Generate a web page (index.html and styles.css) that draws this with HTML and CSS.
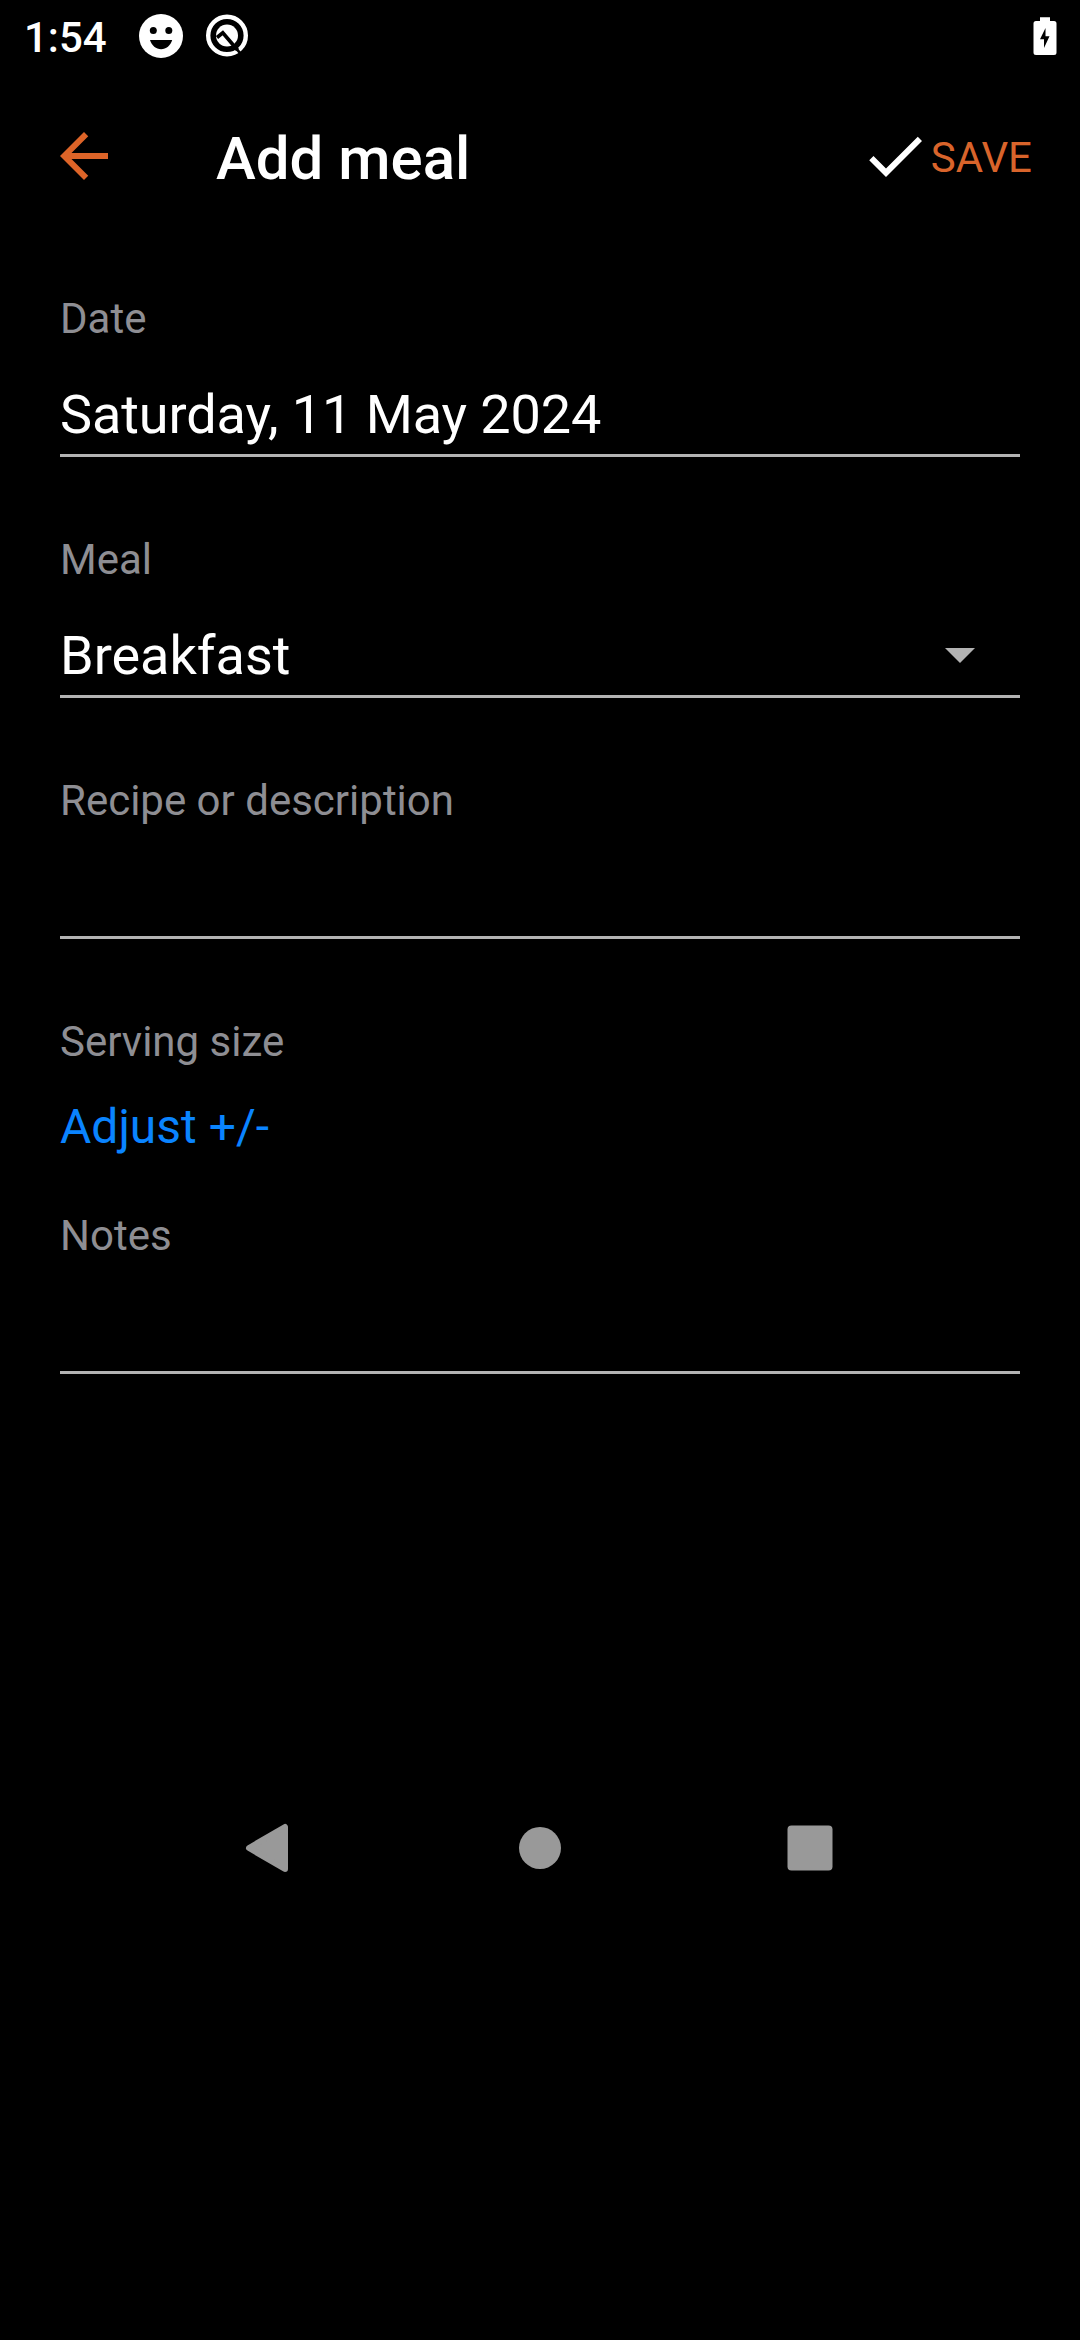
FILE: index.html
```html
<!DOCTYPE html>
<html lang="en">
<head>
<meta charset="utf-8">
<title>Add meal</title>
<link rel="stylesheet" href="styles.css">
</head>
<body>
<div class="screen">
  <div class="status">
    <span class="clock">1:54</span>
    <svg class="mood" viewBox="0 0 44 44"><circle cx="22" cy="22" r="22" fill="#fff"/><circle cx="14.3" cy="16.5" r="3.5"/><circle cx="29.8" cy="16.5" r="3.5"/><path d="M11 26h22.200c-1.600 5.500-6.100 9.200-11.100 9.200s-9.500-3.700-11.100-9.200z"/></svg>
    <svg class="ring" viewBox="0 0 44 44"><circle cx="22" cy="21.500" r="18.800" fill="none" stroke="#fff" stroke-width="4.400"/><circle cx="22" cy="21.500" r="11" fill="#fff"/><path d="M12 23.500L17.800 18.800L32.500 36" fill="none" stroke="#000" stroke-width="3.600"/><path d="M31 34L36.500 41" fill="none" stroke="#000" stroke-width="2.800"/></svg>
    <svg class="battery" viewBox="0 0 24 40"><path fill="#fff" d="M7 1.200h10V5h4a2.500 2.500 0 0 1 2.500 2.500v29A2.500 2.500 0 0 1 21 39H3a2.500 2.500 0 0 1-2.500-2.500v-29A2.500 2.500 0 0 1 3 5h4z"/><path d="M12.500 12v8.300h4L11 32v-8.800H7z"/></svg>
  </div>
  <header class="bar">
    <svg class="icon back" viewBox="0 0 24 24"><path d="M20 11H7.830l5.590-5.590L12 4l-8 8 8 8 1.410-1.410L7.830 13H20v-2z"/></svg>
    <h1 class="title">Add meal</h1>
    <svg class="icon check" viewBox="0 0 24 24"><path d="M9 16.170L4.830 12l-1.420 1.410L9 19 21 7l-1.410-1.410z"/></svg>
    <span class="save">SAVE</span>
  </header>
  <main class="form">
    <section class="field"><div class="label">Date</div><div class="value date">Saturday, 11 May 2024</div></section>
    <section class="field"><div class="label">Meal</div><div class="value select"><span>Breakfast</span><svg class="caret" viewBox="0 0 30 15"><path d="M0 0h30L15 15z"/></svg></div></section>
    <section class="field"><div class="label">Recipe or description</div><div class="value"></div></section>
    <section class="field serving"><div class="label">Serving size</div><div class="adjust">Adjust +/-</div></section>
    <section class="field"><div class="label">Notes</div><div class="value"></div></section>
  </main>
  <nav class="nav">
    <svg class="key" viewBox="0 0 60 60"><path stroke-width="6" stroke-linejoin="round" d="M12 30L48 9v42z" transform="translate(-3 0)"/></svg>
    <svg class="key" viewBox="0 0 60 60"><circle cx="30" cy="30" r="21"/></svg>
    <svg class="key" viewBox="0 0 60 60"><rect x="7.500" y="7.500" width="45" height="45" rx="4"/></svg>
  </nav>
</div>
</body>
</html>
```
FILE: styles.css
```css
* { box-sizing: border-box; margin: 0; }
body { background: #000; }
svg { display: block; flex: none; }
.screen {
  width: 1080px;
  height: 2340px;
  background: #000;
  color: #fff;
  font-family: Roboto, sans-serif;
  display: flex;
  flex-direction: column;
  overflow: hidden;
}
.status { height: 72px; display: flex; align-items: center; padding: 0 23px 0 24px; }
.clock { width: 115px; font-size: 42px; font-weight: 500; line-height: 72px; padding-top: 3px; }
.mood { width: 44px; height: 44px; margin-right: 22px; }
.ring { width: 44px; height: 44px; }
.battery { width: 24px; height: 40px; margin-left: auto; }
.bar { height: 168px; display: flex; align-items: center; padding: 0 48px; }
.icon { width: 72px; height: 72px; }
.back { fill: #dd6428; }
.title { flex: 1; margin-left: 96px; font-size: 60px; font-weight: 500; line-height: 72px; padding-top: 5px; }
.check { fill: #fff; }
.save { padding-top: 3px; font-size: 42px; line-height: 56px; color: #d9642b; }
.form { display: flex; flex-direction: column; gap: 75px; padding: 51px 60px 0; }
.label { height: 56px; font-size: 42px; line-height: 56px; color: #8e8e93; }
.value {
  height: 82px;
  margin-top: 28px;
  border-bottom: 3px solid #b3b3b3;
  font-size: 54px;
  line-height: 79px;
}
.date { letter-spacing: -0.1px; }
.select { display: flex; justify-content: space-between; align-items: center; padding-right: 45px; }
.caret { width: 30px; height: 15px; fill: #b3b3b3; }
.serving { margin-bottom: -26px; }
.adjust { margin-top: 25px; height: 64px; font-size: 48px; line-height: 64px; color: #0a84ff; }
.nav { display: flex; justify-content: space-between; padding: 444px 240px 0; }
.key { width: 60px; height: 60px; fill: #999; stroke: #999; stroke-width: 0; }
```
